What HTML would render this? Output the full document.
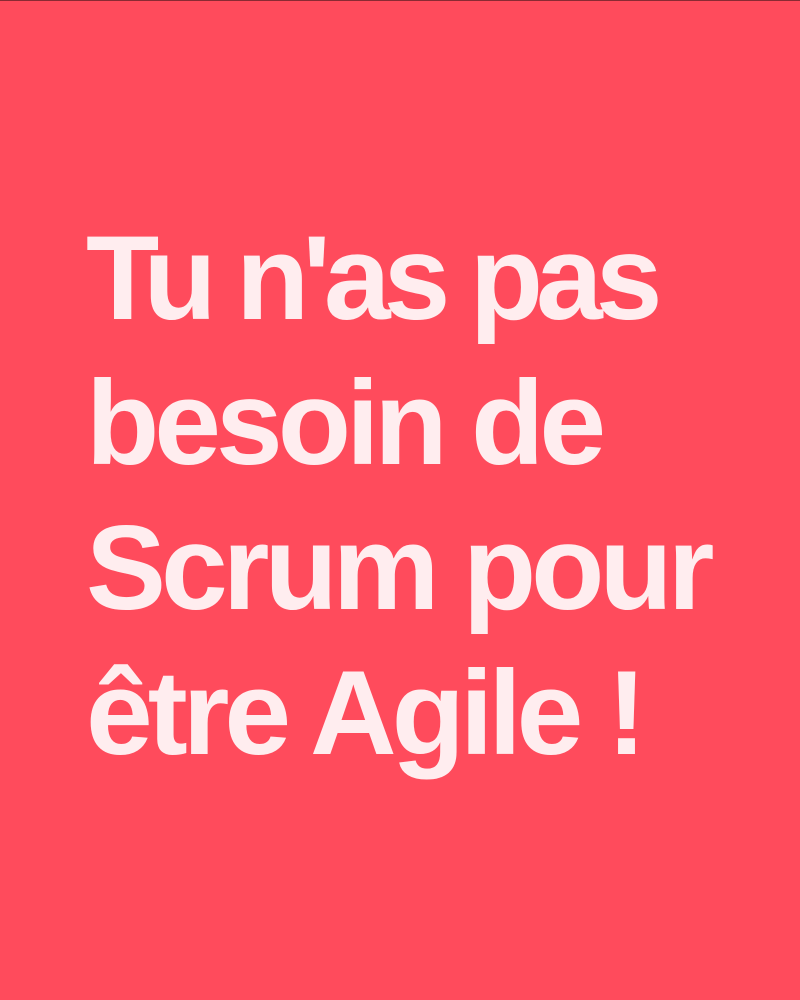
<!DOCTYPE html>
<html><head><meta charset="utf-8"><style>
html,body{margin:0;padding:0}
body{width:800px;height:1000px;background:#FF4B5C;position:relative;overflow:hidden;border-top:1px solid #8a2a33;box-sizing:border-box}
.t{position:absolute;left:86px;top:205px;font-family:"Liberation Sans",sans-serif;font-weight:bold;font-size:120px;line-height:145px;letter-spacing:-5px;color:#FFEDEF;white-space:nowrap}
.a{letter-spacing:-7px}
</style></head><body>
<div class="t"><span class="a">Tu n'as pas</span><br>besoin de<br>Scrum pour<br>être Agile !</div>
</body></html>
